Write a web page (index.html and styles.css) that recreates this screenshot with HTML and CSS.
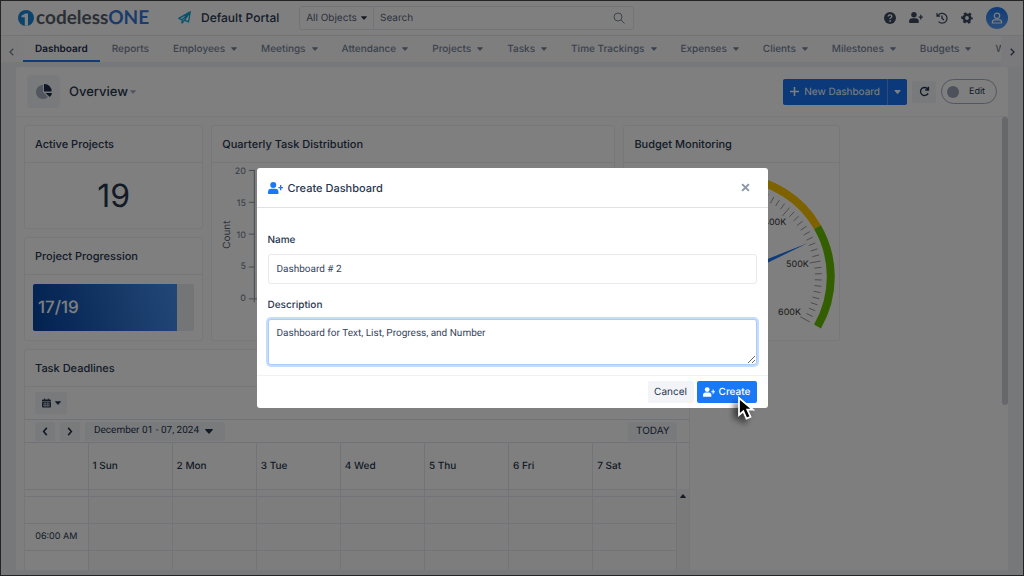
FILE: index.html
```html
<!DOCTYPE html>
<html lang="en">
<head>
<meta charset="utf-8">
<meta name="viewport" content="width=device-width, initial-scale=1">
<title>Overview - Default Portal</title>
<link rel="stylesheet" href="styles.css">
</head>
<body>
<svg class="defs" aria-hidden="true">
  <symbol id="user-plus" viewBox="0 0 20 16"><circle cx="7" cy="4" r="4"/><path d="M0 15v-1.500a4.500 4.500 0 0 1 4.500-4.500h5a4.500 4.500 0 0 1 4.500 4.500v1.500a1 1 0 0 1-1 1h-12a1 1 0 0 1-1-1z"/><path d="M16 4h1.800v2.600h2.200v1.800h-2.200v2.600h-1.800v-2.600h-2.200v-1.800h2.200z"/></symbol>
  <symbol id="caret" viewBox="0 0 8 5"><path d="M.7 0h6.600q1 .2.400 1l-3.200 3.600q-.5.500-1 0l-3.200-3.600q-.6-.8.400-1z"/></symbol>
</svg>

<header class="topbar">
  <a class="logo" href="#">
    <svg class="logo-mark" viewBox="0 0 16 16"><circle cx="8" cy="8" r="8" fill="#1987d8"/><path d="M3.500 5.800L7.300 3.500h2.700v12.300h-3.200v-8.600H3.500z" fill="#fff"/></svg>
    <span class="logo-code">codeless<b>ONE</b></span>
  </a>
  <a class="portal" href="#">
    <svg class="plane" viewBox="0 0 16 16" fill="none" stroke="#12a4dc" stroke-width="1.600" stroke-linejoin="round"><path d="M15 1L1 9l4 2L15 1l-2 12.500-5-2.200M5 11v4l3-3.700L15 1"/></svg>
    <span>Default Portal</span>
  </a>
  <form class="search">
    <button type="button" class="scope">All Objects <svg class="caret dark"><use href="#caret"/></svg></button>
    <input type="text" aria-label="Search" placeholder="Search">
    <svg class="glass" viewBox="0 0 12 12" fill="none" stroke="currentColor"><circle cx="5" cy="5" r="4"/><path d="M8 8l3.500 3.500"/></svg>
  </form>
  <div class="tools">
    <button type="button" aria-label="Help"><svg viewBox="0 0 14 14"><circle cx="7" cy="7" r="7"/><path d="M4.800 5.200q.2-1.900 2.200-1.900t2.200 1.700q0 1-1.200 1.700-.9.500-.9 1.400" fill="none" stroke="#fff" stroke-width="1.500"/><circle cx="7.100" cy="10.400" r="1" fill="#fff"/></svg></button>
    <button type="button" aria-label="Add user"><svg class="wide"><use href="#user-plus"/></svg></button>
    <button type="button" aria-label="History"><svg viewBox="0 0 14 14" fill="none" stroke="currentColor" stroke-width="1.500"><path d="M2.400 4.200A5.700 5.700 0 1 1 3 11.200M1.200 1.200v3.600h3.600M7 4v3.400l2.300 1.800"/></svg></button>
    <button type="button" aria-label="Settings"><svg viewBox="0 0 14 14" fill="none" stroke="currentColor"><circle cx="7" cy="7" r="3.700" stroke-width="3"/><circle cx="7" cy="7" r="5.700" stroke-width="2.200" stroke-dasharray="3 2.970" stroke-dashoffset="1.500"/></svg></button>
    <button type="button" class="avatar" aria-label="Account"><svg viewBox="0 0 12 12" fill="none" stroke="#fff" stroke-width="1.200"><circle cx="6" cy="3.800" r="2.700"/><path d="M1.400 11v-.8q0-2.400 2.400-2.400h4.400q2.400 0 2.400 2.400v.8z"/></svg></button>
  </div>
</header>

<nav class="tabs">
  <button type="button" class="arrow" aria-label="Previous"><svg viewBox="0 0 5 8"><path d="M4.300.8L1 4l3.300 3.200"/></svg></button>
  <div class="tab-list">
    <a href="#" class="tab active">Dashboard</a>
    <a href="#" class="tab">Reports</a>
    <a href="#" class="tab">Employees <svg class="caret"><use href="#caret"/></svg></a>
    <a href="#" class="tab">Meetings <svg class="caret"><use href="#caret"/></svg></a>
    <a href="#" class="tab">Attendance <svg class="caret"><use href="#caret"/></svg></a>
    <a href="#" class="tab">Projects <svg class="caret"><use href="#caret"/></svg></a>
    <a href="#" class="tab">Tasks <svg class="caret"><use href="#caret"/></svg></a>
    <a href="#" class="tab">Time Trackings <svg class="caret"><use href="#caret"/></svg></a>
    <a href="#" class="tab">Expenses <svg class="caret"><use href="#caret"/></svg></a>
    <a href="#" class="tab">Clients <svg class="caret"><use href="#caret"/></svg></a>
    <a href="#" class="tab">Milestones <svg class="caret"><use href="#caret"/></svg></a>
    <a href="#" class="tab">Budgets <svg class="caret"><use href="#caret"/></svg></a>
    <a href="#" class="tab">W</a>
  </div>
  <button type="button" class="arrow next" aria-label="Next"><svg viewBox="0 0 5 8"><path d="M.7.800L4 4 .7 7.200"/></svg></button>
</nav>

<main class="panel">
  <div class="panel-head">
    <span class="pie"><svg viewBox="0 0 18 18"><path d="M8 2a7 7 0 1 0 4.900 12L8 9z" fill="#a5adbd"/><path d="M9 1a7 7 0 0 1 7.500 7.500H9z" fill="#1c2d4c"/><path d="M10.500 10H17q-.3 2.400-2.200 4z" fill="#1c2d4c"/></svg></span>
    <h1>Overview</h1>
    <svg class="caret"><use href="#caret"/></svg>
    <div class="actions">
      <div class="split">
        <button type="button"><svg class="plus" viewBox="0 0 9 9"><path d="M4.500 0v9M0 4.500h9"/></svg>New Dashboard</button>
        <button type="button" class="more" aria-label="More"><svg class="caret"><use href="#caret"/></svg></button>
      </div>
      <button type="button" class="refresh" aria-label="Refresh"><svg viewBox="0 0 12 12" fill="none" stroke="currentColor" stroke-width="1.500"><path d="M9.700 3.500A4.400 4.400 0 1 0 10 8M10.300.8v3.500H6.800"/></svg></button>
      <button type="button" class="toggle"><i></i>Edit</button>
    </div>
  </div>

  <div class="content">
    <div class="board">
      <section class="card number">
        <h2>Active Projects</h2>
        <p class="big">19</p>
      </section>
      <section class="card progress">
        <h2>Project Progression</h2>
        <div class="bar"><div class="fill" style="width:89.5%">17/19</div></div>
      </section>
      <section class="card chart">
        <h2>Quarterly Task Distribution</h2>
        <svg viewBox="0 0 404 178">
          <g stroke="#8b93a3" fill="none"><path d="M42.500 7v133M37 7.500h6M37 39.500h6M37 71.500h6M37 104.500h6M37 136.500h355"/></g>
          <g class="axis" text-anchor="end"><text x="34" y="11">20</text><text x="34" y="43">15</text><text x="34" y="75">10</text><text x="34" y="107">5</text><text x="34" y="139">0</text></g>
          <text class="axis-title" text-anchor="middle" transform="translate(18 72) rotate(-90)">Count</text>
        </svg>
      </section>
      <section class="card gauge">
        <h2>Budget Monitoring</h2>
        <svg viewBox="0 0 216 178">
          <g fill="none" stroke-width="8">
            <path stroke="#e0281e" d="M21.400 164.500A100 100 0 0 1 21.400 64.500"/>
            <path stroke="#ffc400" d="M21.400 64.500A100 100 0 0 1 194.600 64.500"/>
            <path stroke="#68bf00" d="M194.600 64.500A100 100 0 0 1 194.600 164.500"/>
          </g>
          <g id="ticks" stroke="#999"></g>
          <path d="M185 80.500L109.500 117.500 106.500 111.500z" fill="#1c78f5"/>
          <g class="gauge-text"><text x="140" y="62">400K</text><text x="163" y="105">500K</text><text x="155" y="153">600K</text></g>
        </svg>
      </section>
      <section class="card calendar">
        <h2>Task Deadlines</h2>
        <div class="cal-tools"><button type="button" aria-label="Calendar view"><svg class="cal" viewBox="0 0 10 10"><path d="M1 1h1.500v-1h1v1h3v-1h1v1h1.500q1 0 1 1v7q0 1-1 1h-8q-1 0-1-1v-7q0-1 1-1z"/><path d="M0 3.500h10M1 6h8M1 8h8M3.500 4v5.500M6.500 4v5.500" stroke="#eceef3" stroke-width=".7"/></svg><svg class="caret"><use href="#caret"/></svg></button></div>
        <div class="cal-nav">
          <button type="button" class="step" aria-label="Previous week"><svg viewBox="0 0 6 10"><path d="M5 1L1.500 5 5 9"/></svg></button>
          <button type="button" class="step" aria-label="Next week"><svg viewBox="0 0 6 10"><path d="M1 1l3.500 4L1 9"/></svg></button>
          <button type="button" class="range">December 01 - 07, 2024 <svg class="caret"><use href="#caret"/></svg></button>
          <button type="button" class="today">TODAY</button>
        </div>
        <div class="cal-body">
          <table>
            <thead><tr><th class="time"></th><th>1 Sun</th><th>2 Mon</th><th>3 Tue</th><th>4 Wed</th><th>5 Thu</th><th>6 Fri</th><th>7 Sat</th></tr></thead>
            <tbody>
              <tr class="cut"><td class="time"></td><td></td><td></td><td></td><td></td><td></td><td></td><td></td></tr>
              <tr><td class="time"></td><td></td><td></td><td></td><td></td><td></td><td></td><td></td></tr>
              <tr><td class="time">06:00 AM</td><td></td><td></td><td></td><td></td><td></td><td></td><td></td></tr>
              <tr><td class="time"></td><td></td><td></td><td></td><td></td><td></td><td></td><td></td></tr>
            </tbody>
          </table>
          <div class="cal-scroll"><span><svg class="caret up"><use href="#caret"/></svg></span></div>
        </div>
      </section>
    </div>
    <div class="thumb"></div>
  </div>
</main>

<div class="backdrop">
  <form class="modal" role="dialog" aria-labelledby="modal-title">
    <header>
      <svg class="modal-icon"><use href="#user-plus"/></svg>
      <h3 id="modal-title">Create Dashboard</h3>
      <button type="button" class="close" aria-label="Close"><svg viewBox="0 0 8 8"><path d="M1 1l6 6M7 1L1 7"/></svg></button>
    </header>
    <div class="fields">
      <label for="name">Name</label>
      <input id="name" type="text" value="Dashboard # 2">
      <label for="description">Description</label>
      <textarea id="description">Dashboard for Text, List, Progress, and Number</textarea>
    </div>
    <footer>
      <button type="button" class="cancel">Cancel</button>
      <button type="button" class="create"><svg><use href="#user-plus"/></svg>Create
        <svg class="pointer" viewBox="0 0 18 26"><path d="M2 2v17l4.300-3.700 3.200 7.200 4-1.800-3.200-7H16z" fill="#000" stroke="#fff" stroke-width="1.800"/></svg>
      </button>
    </footer>
  </form>
</div>
<script src="gauge.js"></script>
</body>
</html>
```

FILE: styles.css
```css
* { box-sizing: border-box; }
body {
  margin: 0;
  height: 100vh;
  display: flex;
  flex-direction: column;
  overflow: hidden;
  background: #eff1f5;
  color: #27364f;
  fill: currentColor;
  font: 10px/16px Inter, "Liberation Sans", sans-serif;
  text-rendering: geometricPrecision;
}
button, input, textarea { font: inherit; color: inherit; margin: 0; text-rendering: inherit; }
button { border: 0; padding: 0; background: none; display: flex; align-items: center; justify-content: center; }
a { color: inherit; text-decoration: none; }
h1, h2, h3, p { margin: 0; font-weight: 500; }
svg { display: block; flex: none; }
.defs { position: absolute; width: 0; height: 0; }
.caret { width: 7px; height: 4px; }

.topbar { display: flex; align-items: center; height: 36px; flex: none; padding: 0 16px 0 18px; background: #fff; border-bottom: 1px solid #e6e8ec; }
.logo { display: flex; align-items: center; gap: 2px; width: 160px; }
.logo-mark { width: 16px; height: 16px; }
.logo-code { font: 700 19px/20px Lato, sans-serif; color: #57606c; }
.logo-code b { font-weight: 700; color: #3576d8; }
.portal { display: flex; align-items: center; gap: 10px; width: 121px; font-size: 11px; font-weight: 500; white-space: nowrap; }
.plane { width: 13px; height: 13px; }
.search { display: flex; align-items: center; flex: 0 1 335px; height: 24px; border: 1px solid #e6e8ee; border-radius: 3px; color: #59657a; }
.scope { gap: 4px; width: 74px; height: 100%; border-right: 1px solid #e6e8ee; white-space: nowrap; }
.dark { color: #27364f; }
.scope .dark { width: 6px; }
.search input { flex: 1; min-width: 0; border: 0; outline: 0; padding: 0 6px; background: none; }
.search input::placeholder { color: #59657a; opacity: 1; }
.glass { width: 12px; height: 12px; margin-right: 8px; color: #7d889b; }
.tools { display: flex; align-items: center; gap: 13px; margin-left: auto; color: #3c4a63; }
.tools svg { width: 12px; height: 12px; }
.tools .wide { width: 14px; height: 11px; }
.tools .avatar { width: 22px; height: 22px; border-radius: 50%; background: linear-gradient(#1c78f0, #5a9cf5); }
.portal { font-size: 12px; }

.tabs { display: flex; flex: none; height: 26px; background: #fafbfc; color: #76839a; }
.arrow { flex: none; width: 23px; height: 31px; }
.arrow svg { width: 5px; height: 8px; fill: none; stroke: currentColor; stroke-width: 1.3; }
.next { background: #f4f5f8; color: #3c4a63; }
.tab-list { display: flex; flex: 1; overflow: hidden; background: #fdfdfe; }
.tab { display: flex; align-items: center; gap: 6px; padding: 2px 12px 0; font-weight: 500; white-space: nowrap; border-bottom: 2px solid transparent; }
.tab .caret { width: 6px; }
.active { color: #1c2d4c; font-weight: 600; border-color: #1c78f5; }

.panel { flex: 1; min-height: 0; display: flex; flex-direction: column; margin: 5px 16px 6px; background: #fff; border-radius: 3px; overflow: hidden; }
.panel-head { display: flex; align-items: center; flex: none; height: 50px; padding: 0 11px; border-bottom: 1px solid #eceef2; }
.pie { display: grid; place-items: center; width: 33px; height: 33px; margin-right: 9px; border-radius: 4px; background: #f2f4f8; }
.pie svg { width: 18px; height: 18px; }
h1 { font-size: 13px; line-height: 18px; padding-top: 1px; margin-right: 2px; }
.panel-head > .caret { width: 6px; color: #a5adbd; }
.actions { display: flex; align-items: center; gap: 5px; margin-left: auto; }
.split { display: flex; height: 26px; border-radius: 2px; background: #1672f3; color: #fff; }
.split button { gap: 5px; padding: 0 7px; }
.split .more { width: 20px; padding: 0; border-left: 1px solid #5b9cf7; }
.plus { width: 9px; height: 9px; stroke: #fff; stroke-width: 1.5; }
.refresh { width: 24px; height: 22px; border-radius: 2px; background: #f2f4f8; }
.refresh svg { width: 11px; height: 11px; }
.toggle { width: 56px; height: 25px; gap: 10px; justify-content: flex-start; padding-left: 5px; border: 1px solid #a5adbd; border-radius: 13px; font-size: 9px; }
.toggle i { width: 12px; height: 12px; border-radius: 50%; background: #9aa3b5; }

.content { display: flex; flex: 1; min-height: 0; background: #fdfdfd; }
.board { flex: 1; display: grid; grid-template-columns: repeat(26, minmax(0, 1fr)); grid-template-rows: 104px 104px 1fr; gap: 8px; padding: 8px 12px 0 8px; overflow: hidden; }
.thumb { width: 6px; height: 288px; border-radius: 3px; background: #ccd1d9; }
.card { display: flex; flex-direction: column; min-width: 0; border: 1px solid #eceef2; border-radius: 3px; background: #fefefe; }
.card h2 { flex: none; height: 37px; padding: 0 10px; font-size: 11px; line-height: 36px; border-bottom: 1px solid #eceef2; }
.number { grid-column: 1 / span 5; grid-row: 1; }
.progress { grid-column: 1 / span 5; grid-row: 2; }
.chart { grid-column: 6 / span 11; grid-row: 1 / span 2; }
.gauge { grid-column: 17 / span 6; grid-row: 1 / span 2; }
.calendar { grid-column: 1 / span 18; grid-row: 3; overflow: hidden; border-bottom: 0; border-radius: 3px 3px 0 0; }
.big { flex: 1; display: grid; place-items: center; font-size: 32px; font-weight: 400; }
.bar { flex: 1; margin: 9px 8px; border-radius: 2px; background: #e8eaee; overflow: hidden; }
.fill { display: flex; align-items: center; height: 100%; padding-left: 5px; color: #fff; font-size: 17px; font-weight: 500; background: linear-gradient(75deg, #04439f, #4690f0); }
.chart svg, .gauge svg { width: 100%; min-height: 0; }
.axis, .gauge-text { font-size: 9px; fill: #6b7688; }
.gauge-text { fill: #333; }
.axis-title { font-size: 10px; fill: #59657a; }

.cal-tools { flex: none; display: flex; align-items: center; height: 33px; padding: 0 10px; border-bottom: 1px solid #e2e5ea; }
.cal-tools button { gap: 4px; width: 32px; height: 22px; border-radius: 2px; background: #f2f4f8; }
.cal { width: 9px; height: 10px; }
.cal-tools .caret { width: 6px; }
.cal-nav { flex: none; display: flex; align-items: center; gap: 5px; height: 23px; padding: 0 12px 0 10px; border-bottom: 1px solid #e2e5ea; }
.cal-nav button { height: 19px; border-radius: 2px; background: #f2f4f8; }
.cal-nav .step { width: 20px; }
.step svg { width: 6px; height: 9px; fill: none; stroke: currentColor; stroke-width: 1.8; }
.cal-nav .range { gap: 6px; padding: 0 12px 0 9px; font-family: Roboto, sans-serif; }
.range .caret { width: 8px; height: 5px; }
.cal-nav .today { margin-left: auto; width: 49px; }
.cal-body { flex: 1; min-height: 0; display: flex; align-items: flex-start; }
table { flex: 1; width: 100%; table-layout: fixed; border-collapse: collapse; }
th, td { height: 27px; padding: 0 4px; border: solid #e6e9ee; border-width: 0 1px 1px 0; text-align: left; font-weight: 500; }
th { height: 46px; }
td { background: #fbfbfc; }
.cut td { height: 7px; line-height: 0; }
.time { width: 63px; background: #fefefe; text-align: center; font-size: 9px; font-weight: 400; }
.cal-scroll { flex: none; width: 12px; padding-top: 46px; align-self: stretch; }
.cal-scroll span { display: flex; justify-content: center; height: 100%; padding-top: 5px; background: #f4f4f5; }
.up { width: 6px; transform: rotate(180deg); }

.backdrop { position: fixed; inset: 0; display: flex; align-items: center; justify-content: center; background: rgba(0, 0, 0, .5); border: 1px solid #242424; }
.modal { width: 511px; max-width: 94%; background: #fff; border-radius: 3px; }
.modal header { display: flex; align-items: center; gap: 5px; height: 40px; padding: 0 18px 0 11px; border-bottom: 1px solid #dfe1e5; }
.modal-icon { width: 15px; height: 12px; color: #1878f5; }
h3 { font-size: 11px; }
.close { margin-left: auto; color: #8d97a9; }
.close svg { width: 9px; height: 9px; stroke: currentColor; stroke-width: 1.8; }
.fields { display: flex; flex-direction: column; padding: 24px 11px 10px; }
.fields label { font-weight: 500; margin-bottom: 6px; }
.fields input, .fields textarea { width: 100%; padding: 6px 8px; border: 1px solid #e6e9ee; border-radius: 3px; outline: 0; color: #36445c; background: #fff; font-family: Roboto, sans-serif; }
.fields input { height: 30px; margin-bottom: 13px; }
.fields textarea { display: block; height: 46px; border-color: #a9ccfd; box-shadow: 0 0 0 2px #c5dcff; resize: vertical; }
.modal footer { display: flex; justify-content: flex-end; gap: 3px; padding: 5px 11px; border-top: 1px solid #f0f1f4; }
.modal footer button { height: 22px; border-radius: 2px; }
.modal footer .cancel { width: 46px; background: #f2f4f8; color: #27364f; }
.modal footer .create { position: relative; gap: 4px; width: 60px; background: #1878f5; color: #fff; font-weight: 500; }
.create svg { width: 12px; height: 10px; }
.create .pointer { position: absolute; left: 40px; top: 15px; width: 18px; height: 26px; filter: drop-shadow(-4px 4px 3px rgba(0, 0, 0, .6)); }
```

FILE: gauge.js
```js
// Scale marks: one every 4 degrees across 240, longer at each 100K.
const ticks = document.getElementById('ticks');
for (let i = 0; i <= 60; i++) {
  const a = (150 + i * 4) * Math.PI / 180;
  const inner = i % 10 === 0 ? 80 : 84;
  const line = document.createElementNS('http://www.w3.org/2000/svg', 'line');
  line.setAttribute('x1', 108 + inner * Math.cos(a));
  line.setAttribute('y1', 114.5 + inner * Math.sin(a));
  line.setAttribute('x2', 108 + 91 * Math.cos(a));
  line.setAttribute('y2', 114.5 + 91 * Math.sin(a));
  ticks.appendChild(line);
}
```
